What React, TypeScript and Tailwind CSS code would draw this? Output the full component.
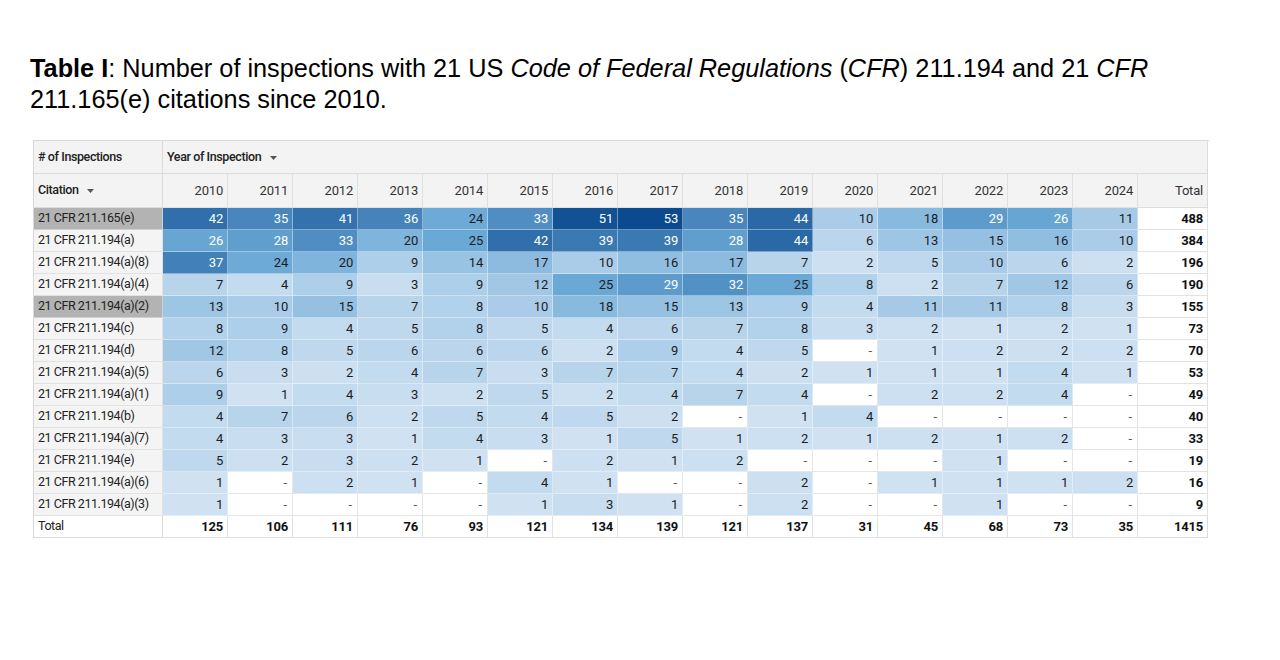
import React from "react";

const years = [2010, 2011, 2012, 2013, 2014, 2015, 2016, 2017, 2018, 2019, 2020, 2021, 2022, 2023, 2024];

type Row = { name: string; vals: number[]; total: number; hl?: boolean };

const rows: Row[] = [
  { name: "21 CFR 211.165(e)", vals: [42, 35, 41, 36, 24, 33, 51, 53, 35, 44, 10, 18, 29, 26, 11], total: 488, hl: true },
  { name: "21 CFR 211.194(a)", vals: [26, 28, 33, 20, 25, 42, 39, 39, 28, 44, 6, 13, 15, 16, 10], total: 384 },
  { name: "21 CFR 211.194(a)(8)", vals: [37, 24, 20, 9, 14, 17, 10, 16, 17, 7, 2, 5, 10, 6, 2], total: 196 },
  { name: "21 CFR 211.194(a)(4)", vals: [7, 4, 9, 3, 9, 12, 25, 29, 32, 25, 8, 2, 7, 12, 6], total: 190 },
  { name: "21 CFR 211.194(a)(2)", vals: [13, 10, 15, 7, 8, 10, 18, 15, 13, 9, 4, 11, 11, 8, 3], total: 155, hl: true },
  { name: "21 CFR 211.194(c)", vals: [8, 9, 4, 5, 8, 5, 4, 6, 7, 8, 3, 2, 1, 2, 1], total: 73 },
  { name: "21 CFR 211.194(d)", vals: [12, 8, 5, 6, 6, 6, 2, 9, 4, 5, 0, 1, 2, 2, 2], total: 70 },
  { name: "21 CFR 211.194(a)(5)", vals: [6, 3, 2, 4, 7, 3, 7, 7, 4, 2, 1, 1, 1, 4, 1], total: 53 },
  { name: "21 CFR 211.194(a)(1)", vals: [9, 1, 4, 3, 2, 5, 2, 4, 7, 4, 0, 2, 2, 4, 0], total: 49 },
  { name: "21 CFR 211.194(b)", vals: [4, 7, 6, 2, 5, 4, 5, 2, 0, 1, 4, 0, 0, 0, 0], total: 40 },
  { name: "21 CFR 211.194(a)(7)", vals: [4, 3, 3, 1, 4, 3, 1, 5, 1, 2, 1, 2, 1, 2, 0], total: 33 },
  { name: "21 CFR 211.194(e)", vals: [5, 2, 3, 2, 1, 0, 2, 1, 2, 0, 0, 0, 1, 0, 0], total: 19 },
  { name: "21 CFR 211.194(a)(6)", vals: [1, 0, 2, 1, 0, 4, 1, 0, 0, 2, 0, 1, 1, 1, 2], total: 16 },
  { name: "21 CFR 211.194(a)(3)", vals: [1, 0, 0, 0, 0, 1, 3, 1, 0, 2, 0, 0, 1, 0, 0], total: 9 },
];

const totals = [125, 106, 111, 76, 93, 121, 134, 139, 121, 137, 31, 45, 68, 73, 35];

function heat(v: number): string {
  const lo = [208, 226, 242];
  const mid = [106, 168, 214];
  const hi = [11, 74, 143];
  let a: number[], b: number[], t: number;
  if (v <= 25) {
    a = lo; b = mid; t = (v - 1) / 24;
  } else {
    a = mid; b = hi; t = (v - 25) / 28;
  }
  const c = a.map((x, i) => Math.round(x + (b[i] - x) * t));
  return `rgb(${c[0]},${c[1]},${c[2]})`;
}

function Caret() {
  return (
    <svg width="7" height="4" viewBox="0 0 7 4" className="ml-[9px] mt-[1px]">
      <path d="M0 0 L7 0 L3.5 4 Z" fill="#555" />
    </svg>
  );
}

export default function App() {
  const font = { fontFamily: "Roboto, 'Noto Sans', sans-serif" };
  return (
    <div className="w-[1280px] h-[660px] bg-white overflow-hidden">
      <p
        className="ml-[30px] pt-[53px] w-[1180px] text-[25.3px] leading-[31px] text-black"
        style={{ fontFamily: "'Liberation Sans', Arial, sans-serif" }}
      >
        <b>Table I</b>: Number of inspections with 21 US <i>Code of Federal Regulations</i> (<i>CFR</i>) 211.194 and 21{" "}
        <i>CFR</i> 211.165(e) citations since 2010.
      </p>

      <div
        className="ml-[33px] mt-[25px] w-[1176px] border-l border-t border-[#d8d8d8] grid grid-cols-[129px_repeat(15,65px)_70px] text-[13px] tracking-[-0.2px] text-[#222]"
        style={font}
      >
        {/* header row 1 */}
        <div className="h-[33px] bg-[#f3f3f3] border-r border-b border-[#dcdcdc] flex items-center pl-[4px] font-medium text-[12.5px] tracking-[-0.4px] text-[#222]">
          # of Inspections
        </div>
        <div className="col-span-16 h-[33px] bg-[#f3f3f3] border-r border-b border-[#dcdcdc] flex items-center pl-[4px] font-medium text-[12.5px] tracking-[-0.4px] text-[#222]">
          Year of Inspection
          <Caret />
        </div>

        {/* header row 2 */}
        <div className="h-[34px] bg-[#f3f3f3] border-r border-b border-[#dcdcdc] flex items-center pl-[4px] font-medium text-[12.5px] tracking-[-0.4px] text-[#222]">
          Citation
          <Caret />
        </div>
        {years.map((y) => (
          <div
            key={y}
            className="h-[34px] bg-[#f3f3f3] border-r border-b border-[#e0e0e0] flex items-center justify-end pr-[4px] text-[#333]"
          >
            {y}
          </div>
        ))}
        <div className="h-[34px] bg-[#f3f3f3] border-r border-b border-[#dcdcdc] flex items-center justify-end pr-[4px] text-[#333]">
          Total
        </div>

        {/* data rows */}
        {rows.map((r) => (
          <React.Fragment key={r.name}>
            <div
              className={
                r.hl
                  ? "h-[22px] bg-[#b3b3b3] border-r border-b border-[#d0d0d0] flex items-center pl-[4px] text-[12.5px] tracking-[-0.45px] text-[#222]"
                  : "h-[22px] bg-[#f4f4f4] border-r border-b border-[#e2e2e2] flex items-center pl-[4px] text-[12.5px] tracking-[-0.45px] text-[#222]"
              }
            >
              {r.name}
            </div>
            {r.vals.map((v, i) =>
              v > 0 ? (
                <div
                  key={i}
                  className={
                    v >= 26
                      ? "h-[22px] border-r border-b border-white/40 flex items-center justify-end pr-[4px] text-white"
                      : "h-[22px] border-r border-b border-white/40 flex items-center justify-end pr-[4px] text-[#1c1c1c]"
                  }
                  style={{ backgroundColor: heat(v) }}
                >
                  {v}
                </div>
              ) : (
                <div
                  key={i}
                  className="h-[22px] bg-white border-r border-b border-[#e6e6e6] flex items-center justify-end pr-[5px] text-[#555]"
                >
                  -
                </div>
              )
            )}
            <div className="h-[22px] bg-white border-r border-b border-[#e2e2e2] flex items-center justify-end pr-[4px] font-bold text-[#111]">
              {r.total}
            </div>
          </React.Fragment>
        ))}

        {/* total row */}
        <div className="h-[22px] bg-white border-r border-b border-[#dcdcdc] flex items-center pl-[4px] text-[12.5px] tracking-[-0.45px] text-[#222]">
          Total
        </div>
        {totals.map((t, i) => (
          <div
            key={i}
            className="h-[22px] bg-white border-r border-b border-[#e2e2e2] flex items-center justify-end pr-[4px] font-bold text-[#111]"
          >
            {t}
          </div>
        ))}
        <div className="h-[22px] bg-white border-r border-b border-[#dcdcdc] flex items-center justify-end pr-[4px] font-bold text-[#111]">
          1415
        </div>
      </div>
    </div>
  );
}
